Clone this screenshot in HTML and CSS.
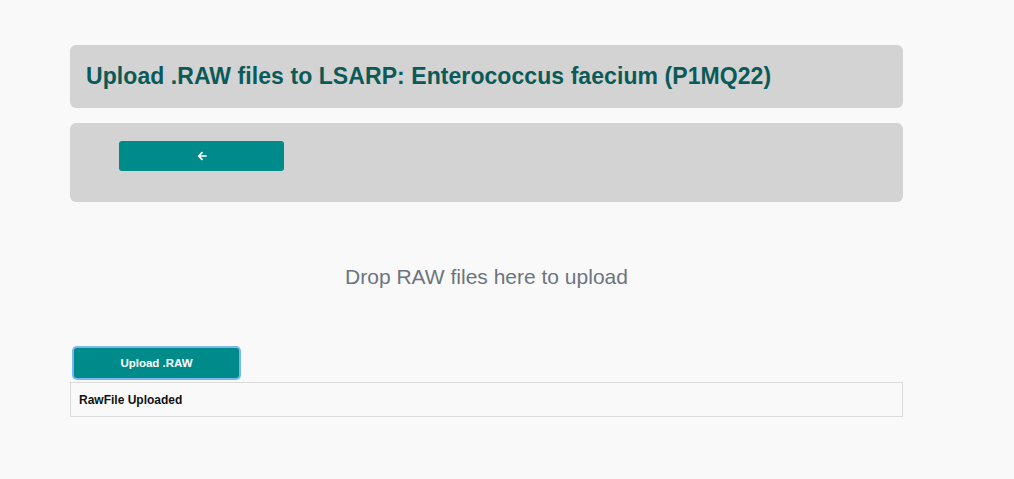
FILE: index.html
```html
<!DOCTYPE html>
<html>
<head>
<meta charset="utf-8">
<link rel="stylesheet" href="styles.css">
</head>
<body>
<div class="page">
  <div class="card header">
    <h1 class="title">Upload .RAW files to LSARP: Enterococcus faecium (P1MQ22)</h1>
  </div>
  <div class="card toolbar">
    <button class="back-btn" type="button" aria-label="Back">
      <svg width="10" height="10" viewBox="0 0 10 10"><path d="M9 5H2M5 1.6L1.6 5 5 8.4" fill="none" stroke="#fff" stroke-width="1.7" stroke-linecap="round" stroke-linejoin="round"/></svg>
    </button>
  </div>
  <div class="dropzone">Drop RAW files here to upload</div>
  <div class="upload-row">
    <button class="upload-btn" type="button">Upload .RAW</button>
  </div>
  <table class="files">
    <thead><tr><th>RawFile Uploaded</th></tr></thead>
  </table>
</div>
</body>
</html>
```
FILE: styles.css
```css
html, body {
  margin: 0;
  padding: 0;
  background: #f9f9f9;
  font-family: "Liberation Sans", Arial, sans-serif;
}
.page {
  width: 833px;
  margin-left: 70px;
  padding-top: 45px;
}
.card {
  background: #d3d3d3;
  border-radius: 6px;
}
.header {
  height: 63px;
  display: flex;
  align-items: center;
  padding-left: 16px;
}
.title {
  margin: 0;
  font-size: 23px;
  font-weight: bold;
  color: #0b5a57;
  letter-spacing: 0.07px;
}
.toolbar {
  margin-top: 15px;
  height: 79px;
  padding: 18px 0 0 49px;
  box-sizing: border-box;
}
.back-btn {
  width: 165px;
  height: 30px;
  background: #008b8b;
  border: none;
  border-radius: 3px;
  display: flex;
  align-items: center;
  justify-content: center;
  padding: 0;
}
.dropzone {
  height: 144px;
  display: flex;
  align-items: center;
  justify-content: center;
  font-size: 21px;
  color: #6c757d;
  padding-top: 6px;
  box-sizing: border-box;
}
.upload-row {
  padding: 2px 0 0 4px;
  height: 36px;
  box-sizing: border-box;
}
.upload-btn {
  width: 165px;
  height: 30px;
  background: #008b8b;
  color: #fff;
  border: none;
  border-radius: 3px;
  font-family: "Liberation Sans", Arial, sans-serif;
  font-size: 11.5px;
  font-weight: bold;
  box-shadow: 0 0 0 2px #7ab6f2;
}
.files {
  width: 833px;
  border-collapse: collapse;
  border: 1px solid #dcdcdc;
}
.files th {
  text-align: left;
  font-size: 12px;
  font-weight: bold;
  color: #111;
  height: 33px;
  padding: 0 8px;
}
```
